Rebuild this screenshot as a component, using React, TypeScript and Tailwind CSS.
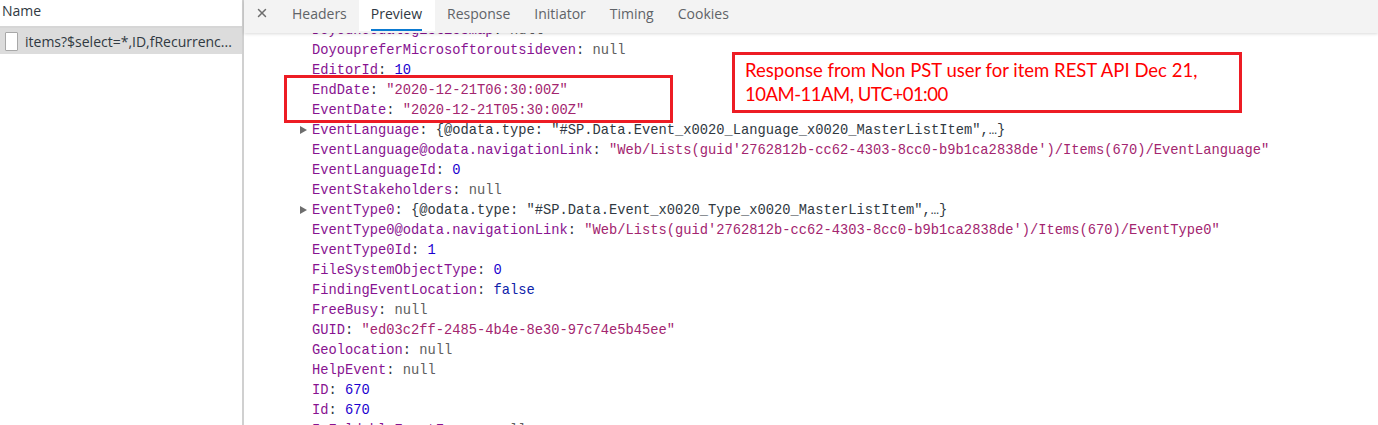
import { X } from "lucide-react";

type Row = {
  k: string;
  v: string;
  kind: "null" | "num" | "str" | "bool" | "obj";
  arrow?: boolean;
};

const rows: Row[] = [
  { k: "Doyouneedalogisticsmap", v: "null", kind: "null" },
  { k: "DoyoupreferMicrosoftoroutsideven", v: "null", kind: "null" },
  { k: "EditorId", v: "10", kind: "num" },
  { k: "EndDate", v: '"2020-12-21T06:30:00Z"', kind: "str" },
  { k: "EventDate", v: '"2020-12-21T05:30:00Z"', kind: "str" },
  { k: "EventLanguage", v: '{@odata.type: "#SP.Data.Event_x0020_Language_x0020_MasterListItem",…}', kind: "obj", arrow: true },
  { k: "EventLanguage@odata.navigationLink", v: "\"Web/Lists(guid'2762812b-cc62-4303-8cc0-b9b1ca2838de')/Items(670)/EventLanguage\"", kind: "str" },
  { k: "EventLanguageId", v: "0", kind: "num" },
  { k: "EventStakeholders", v: "null", kind: "null" },
  { k: "EventType0", v: '{@odata.type: "#SP.Data.Event_x0020_Type_x0020_MasterListItem",…}', kind: "obj", arrow: true },
  { k: "EventType0@odata.navigationLink", v: "\"Web/Lists(guid'2762812b-cc62-4303-8cc0-b9b1ca2838de')/Items(670)/EventType0\"", kind: "str" },
  { k: "EventType0Id", v: "1", kind: "num" },
  { k: "FileSystemObjectType", v: "0", kind: "num" },
  { k: "FindingEventLocation", v: "false", kind: "bool" },
  { k: "FreeBusy", v: "null", kind: "null" },
  { k: "GUID", v: '"ed03c2ff-2485-4b4e-8e30-97c74e5b45ee"', kind: "str" },
  { k: "Geolocation", v: "null", kind: "null" },
  { k: "HelpEvent", v: "null", kind: "null" },
  { k: "ID", v: "670", kind: "num" },
  { k: "Id", v: "670", kind: "num" },
  { k: "IsFoldableEventForce", v: "null", kind: "null" },
];

const valueColor = {
  null: "text-[#5e5e5e]",
  num: "text-[#1c00cf]",
  bool: "text-[#0d22aa]",
  str: "text-[#a3256f]",
  obj: "text-[#303942]",
};

function JsonRow({ row }: { row: Row }) {
  return (
    <div className="flex h-5 shrink-0 leading-5 whitespace-pre text-[#303942]">
      <div className="flex w-[68px] shrink-0 items-center justify-end pr-[5px]">
        {row.arrow && (
          <span className="mb-[2px] h-0 w-0 border-y-[4px] border-l-[7px] border-y-transparent border-l-[#6e6e6e]" />
        )}
      </div>
      <div>
        <span className="text-[#881391]">{row.k}</span>
        <span>: </span>
        <span className={valueColor[row.kind]}>{row.v}</span>
      </div>
    </div>
  );
}

const tabs = ["Headers", "Preview", "Response", "Initiator", "Timing", "Cookies"];

export default function App() {
  return (
    <div className="relative flex h-[425px] w-[1378px] overflow-hidden bg-white font-['Open_Sans',sans-serif]">
      {/* left request list */}
      <div className="w-[244px] shrink-0 border-r-2 border-[#d0d0d0]">
        <div className="h-[28px] border-b-2 border-[#d6d6d6] pl-[2px] text-[14px] leading-[22px] text-[#303942]">Name</div>
        <div className="flex h-[26px] items-center bg-[#dcdcdc] pl-[5px] text-[14px] text-[#303942]">
          <span className="mr-[7px] h-[19px] w-[13px] rounded-[1px] border border-[#a8a8a8] bg-white" />
          <span>items?$select=*,ID,fRecurrenc...</span>
        </div>
      </div>

      <div className="flex min-w-0 flex-1 flex-col">
        {/* tab bar */}
        <div className="relative z-10 flex h-[33px] shrink-0 items-start bg-[#f3f3f3] text-[14px] text-[#5f6368] shadow-[0_1px_3px_rgba(0,0,0,0.15)]">
          <div className="flex w-[36px] shrink-0 justify-center pt-[6px]">
            <X size={14} strokeWidth={2.5} className="text-[#6e6e6e]" />
          </div>
          <div className="flex">
            {tabs.map((t) => (
              <div
                key={t}
                className={
                  t === "Preview"
                    ? "relative h-[31px] bg-white pl-[12px] pr-[13px] pt-[3px] text-[#303942]"
                    : "px-[12px] pt-[3px]"
                }
              >
                {t}
                {t === "Preview" && <span className="absolute bottom-0 left-[12px] right-[13px] h-[2px] bg-[#0b7ad1]" />}
              </div>
            ))}
          </div>
        </div>

        {/* json body */}
        <div className="-mt-[12px] flex flex-col font-['Liberation_Mono',monospace] text-[13.75px]">
          {rows.map((r) => (
            <JsonRow key={r.k} row={r} />
          ))}
        </div>
      </div>

      {/* annotations */}
      <div className="absolute left-[284px] top-[75px] z-20 h-[48px] w-[389px] border-[3px] border-[#ed1c24]" />
      <div className="absolute left-[732px] top-[52px] z-20 h-[61px] w-[510px] border-[3px] border-[#ed1c24] bg-white pl-[10px] pt-[3px] font-['Lato',sans-serif] text-[18.5px] leading-[24px] text-[#ff0000]">
        <div>Response from Non PST user for item REST API Dec 21,</div>
        <div className="tracking-[-0.5px]">10AM-11AM, UTC+01:00</div>
      </div>
    </div>
  );
}
